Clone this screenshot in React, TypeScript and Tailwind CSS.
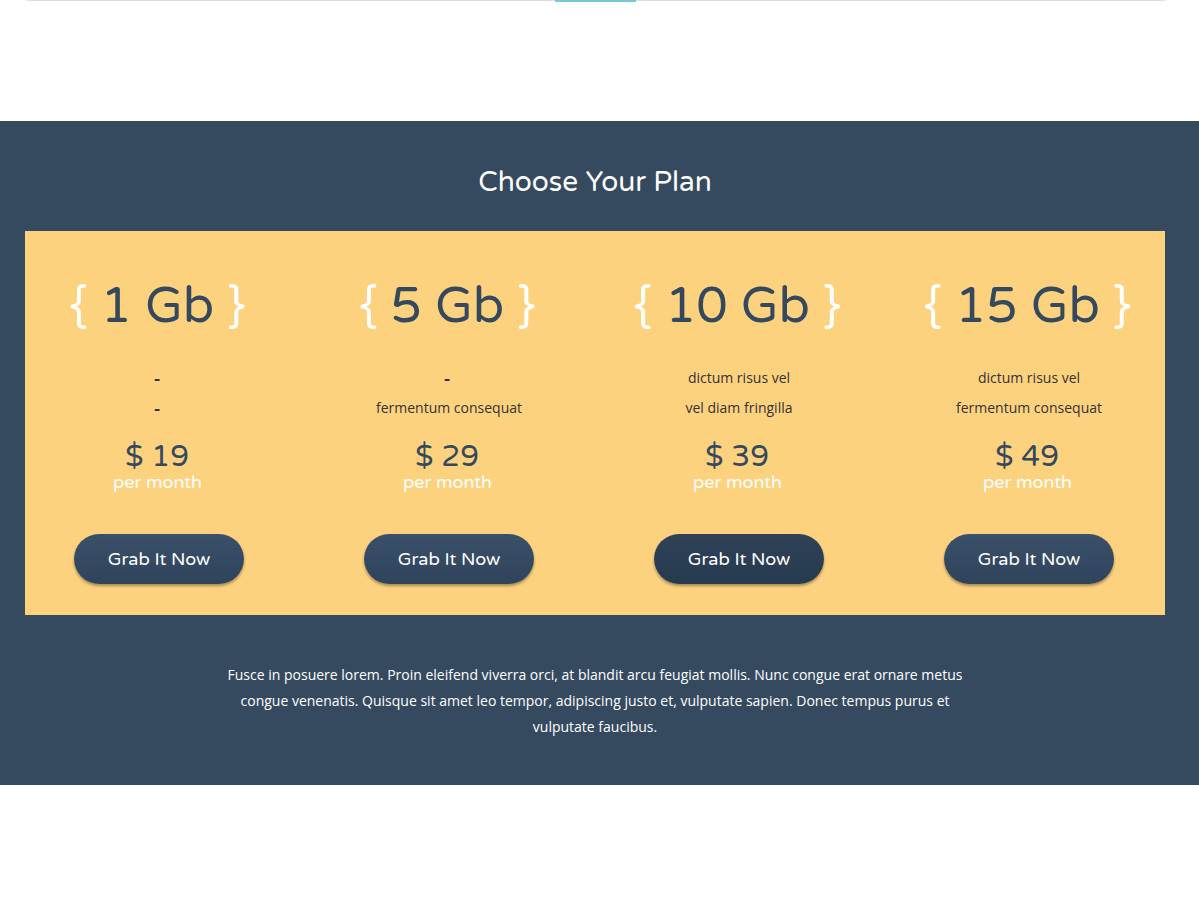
import React from 'react'

const plans = [
  { size: '1 Gb', lines: ['-', '-'], price: '19', dark: false },
  { size: '5 Gb', lines: ['-', 'fermentum consequat'], price: '29', dark: false },
  { size: '10 Gb', lines: ['dictum risus vel', 'vel diam fringilla'], price: '39', dark: true },
  { size: '15 Gb', lines: ['dictum risus vel', 'fermentum consequat'], price: '49', dark: false },
]

const round = { fontFamily: '"Varela Round", Lato, "Open Sans", sans-serif' }
const body = { fontFamily: '"Open Sans", "Noto Sans", sans-serif' }

export default function App() {
  return (
    <div className="w-[1199px] bg-white">
      {/* top rule */}
      <div className="ml-[27px] w-[1138px] h-px bg-[#dedede] relative">
        <div className="absolute left-[528px] top-0 w-[81px] h-[2px] bg-[#7cc8d4]" />
      </div>
      <div className="h-[120px]" />

      <section className="bg-[#354a5f] pt-[42px] pb-[45px]">
        <div className="w-[1190px]">
          <h2 className="text-center text-white text-[28px] leading-[38px]" style={round}>
            Choose Your Plan
          </h2>
          <div className="mt-[30px] ml-[25px] w-[1140px] h-[384px] bg-[#fdd27f]">
            <div className="grid grid-cols-[repeat(4,290px)] -ml-[11px] pt-[47px]">
              {plans.map((p) => (
                <div key={p.size} className="flex flex-col items-center">
                  <div className="-ml-[3px] text-[50px] leading-[56px] text-[#34495e] whitespace-nowrap" style={round}>
                    <span className="text-white">{'{'}</span> {p.size} <span className="text-white">{'}'}</span>
                  </div>
                  <div className="mt-[29px] text-[14px] leading-[30px] text-[#333] text-center" style={body}>
                    {p.lines.map((l, i) =>
                      l === '-' ? (
                        <div key={i} className="-ml-[4px] text-[19px] font-semibold">
                          -
                        </div>
                      ) : (
                        <div key={i}>{l}</div>
                      )
                    )}
                  </div>
                  <div className="-ml-[4px] mt-[19px] text-[30px] leading-[30px] text-[#34495e]" style={round}>
                    $ {p.price}
                  </div>
                  <div className="-ml-[3px] mt-0 text-[18px] leading-[20px] text-white" style={round}>
                    per month
                  </div>
                  <button
                    className={
                      p.dark
                        ? 'mt-[42px] w-[170px] h-[50px] rounded-full text-white text-[18px] bg-gradient-to-b from-[#2f4257] to-[#263a50] shadow-[0_2px_3px_rgba(0,0,0,0.35)]'
                        : 'mt-[42px] w-[170px] h-[50px] rounded-full text-white text-[18px] bg-gradient-to-b from-[#3a506a] to-[#2f445b] shadow-[0_2px_3px_rgba(0,0,0,0.35)]'
                    }
                    style={round}
                  >
                    Grab It Now
                  </button>
                </div>
              ))}
            </div>
          </div>
          <p
            className="mt-[47px] mx-auto w-[760px] text-center text-white text-[14px] leading-[26px]"
            style={body}
          >
            Fusce in posuere lorem. Proin eleifend viverra orci, at blandit arcu feugiat mollis. Nunc congue erat ornare
            metus congue venenatis. Quisque sit amet leo tempor, adipiscing justo et, vulputate sapien. Donec tempus purus
            et vulputate faucibus.
          </p>
        </div>
      </section>
      <div className="h-[118px]" />
    </div>
  )
}
